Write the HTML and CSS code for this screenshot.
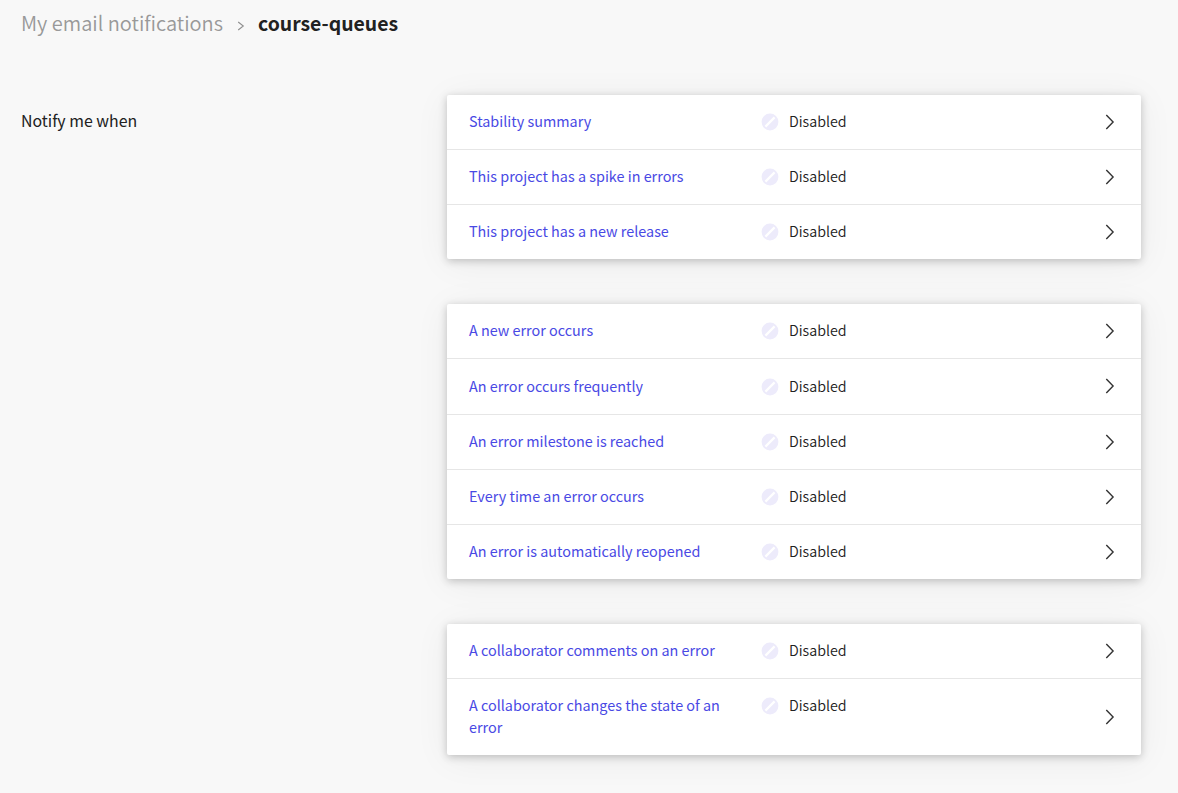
FILE: index.html
```html
<!DOCTYPE html>
<html lang="en">
<head>
<meta charset="utf-8">
<title>My email notifications</title>
<link rel="stylesheet" href="styles.css">
</head>
<body>
<svg class="defs" aria-hidden="true">
  <symbol id="off" viewBox="0 0 18 18"><circle cx="9" cy="9" r="8.4" fill="#edebfb"/><path d="M4.4 13.6 13.6 4.4" stroke="#fff" stroke-width="2.2"/></symbol>
  <symbol id="chev" viewBox="0 0 10 16"><path d="M1.3.9 8.1 8 1.3 15.1" fill="none" stroke="#333" stroke-width="1.4"/></symbol>
</svg>
<header class="breadcrumb">
  <a class="breadcrumb-parent">My email notifications</a>
  <svg class="breadcrumb-sep" viewBox="0 0 8 10"><path d="M1.2 1 6.3 5 1.2 9" fill="none" stroke="#8f8f8f" stroke-width="1.1"/></svg>
  <h1 class="breadcrumb-current">course-queues</h1>
</header>
<main class="settings">
  <h2 class="settings-label">Notify me when</h2>
  <div class="cards">
    <section class="card">
      <div class="row"><a class="name">Stability summary</a><svg class="off"><use href="#off"/></svg><span class="status">Disabled</span><svg class="chev"><use href="#chev"/></svg></div>
      <div class="row"><a class="name">This project has a spike in errors</a><svg class="off"><use href="#off"/></svg><span class="status">Disabled</span><svg class="chev"><use href="#chev"/></svg></div>
      <div class="row"><a class="name">This project has a new release</a><svg class="off"><use href="#off"/></svg><span class="status">Disabled</span><svg class="chev"><use href="#chev"/></svg></div>
    </section>
    <section class="card">
      <div class="row"><a class="name">A new error occurs</a><svg class="off"><use href="#off"/></svg><span class="status">Disabled</span><svg class="chev"><use href="#chev"/></svg></div>
      <div class="row row-roomy"><a class="name">An error occurs frequently</a><svg class="off"><use href="#off"/></svg><span class="status">Disabled</span><svg class="chev"><use href="#chev"/></svg></div>
      <div class="row"><a class="name">An error milestone is reached</a><svg class="off"><use href="#off"/></svg><span class="status">Disabled</span><svg class="chev"><use href="#chev"/></svg></div>
      <div class="row"><a class="name">Every time an error occurs</a><svg class="off"><use href="#off"/></svg><span class="status">Disabled</span><svg class="chev"><use href="#chev"/></svg></div>
      <div class="row"><a class="name">An error is automatically reopened</a><svg class="off"><use href="#off"/></svg><span class="status">Disabled</span><svg class="chev"><use href="#chev"/></svg></div>
    </section>
    <section class="card">
      <div class="row"><a class="name">A collaborator comments on an error</a><svg class="off"><use href="#off"/></svg><span class="status">Disabled</span><svg class="chev"><use href="#chev"/></svg></div>
      <div class="row"><a class="name">A collaborator changes the state of an error</a><svg class="off"><use href="#off"/></svg><span class="status">Disabled</span><svg class="chev"><use href="#chev"/></svg></div>
    </section>
  </div>
</main>
</body>
</html>
```
FILE: styles.css
```css
* { box-sizing: border-box; }
body {
  margin: 0;
  min-height: 793px;
  background: #f8f8f8;
  color: #212121;
  font: 14.4px/22px "Noto Sans CJK JP", "Noto Sans", sans-serif;
}
.defs { display: none; }
svg { display: block; flex: none; }
.breadcrumb {
  display: flex;
  align-items: center;
  height: 46px;
  padding-left: 21px;
}
.breadcrumb-parent { width: 216px; font-size: 20px; font-weight: 350; color: #999; white-space: nowrap; }
.breadcrumb-sep { width: 8px; height: 10px; margin: 5px 13px 0 0; }
.breadcrumb-current { margin: 0; font-size: 19.4px; font-weight: 700; white-space: nowrap; }
.settings {
  display: grid;
  grid-template-columns: 426px 694px;
  padding: 49px 0 0 21px;
}
.settings-label { margin: 15px 0 0; font-size: 15.9px; font-weight: 400; }
.cards { display: grid; gap: 45px; }
.card {
  background: #fff;
  border-radius: 2px;
  box-shadow: 0 2px 8px rgba(0, 0, 0, .22), 0 4px 36px rgba(0, 0, 0, .06);
}
.row {
  display: grid;
  grid-template-columns: 292px 28px 1fr 10px;
  align-items: start;
  padding: 15px 26px 17px 22px;
}
.row + .row { border-top: 1px solid #e6e6e6; }
.row-roomy { padding-top: 16px; }
.name { padding-right: 30px; color: #4949e4; }
.status { font-size: 14.3px; font-weight: 350; color: #212121; }
.off { width: 18px; height: 18px; margin-top: 3px; }
.chev { width: 10px; height: 16px; margin-top: 2px; align-self: center; }
.row-roomy .chev { margin-top: 0; }
```
